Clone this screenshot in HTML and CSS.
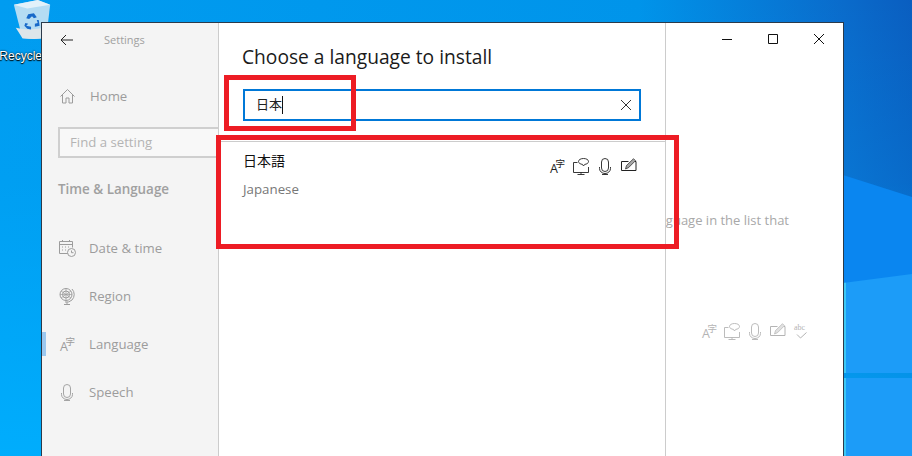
FILE: index.html
```html
<!DOCTYPE html>
<html lang="en">
<head>
<meta charset="utf-8">
<title>Settings</title>
<link rel="stylesheet" href="styles.css">
</head>
<body>
<svg class="defs" width="0" height="0" aria-hidden="true">
  <defs>
    <symbol id="i-lang" viewBox="0 0 17 17">
      <text class="lang-a" x="1" y="15">A</text>
      <text class="lang-z" x="6.500" y="9">字</text>
    </symbol>
    <symbol id="i-display" viewBox="0 0 17 17">
      <path d="M4.500 4.500h-4v10h15V9M8 14.500v2M4.500 16.500h7" fill="none" stroke="currentColor" stroke-width=".9"/>
      <path d="M10.500.5c2.800 0 5 1.200 5 3s-2 2.700-3.800 2.900L10.500 8l-1-1.600C7.500 6.200 5.500 5.200 5.500 3.500s2.200-3 5-3z" fill="#fff" stroke="currentColor" stroke-width=".9"/>
    </symbol>
    <symbol id="i-mic" viewBox="0 0 17 17">
      <path d="M4.500 4a3.500 3.500 0 0 1 7 0v6a3.500 3.500 0 0 1-7 0zM2.500 9v1.500a5.500 5 0 0 0 11 0V9M8 15.500v1M5 16.500h6" fill="none" stroke="currentColor" stroke-width=".9"/>
    </symbol>
    <symbol id="i-pen" viewBox="0 0 17 17">
      <path d="M7.500 3.500h-7v9h14.500V3.500h-1" fill="none" stroke="currentColor"/>
      <path d="M4.500 11l1-3.500L12.500.7l2 2-7 7z" fill="currentColor" fill-opacity=".4" stroke="currentColor" stroke-width=".7"/>
    </symbol>
    <symbol id="i-abc" viewBox="0 0 17 17">
      <text class="abc" x="1" y="7">abc</text>
      <path d="M4 11.500l3.500 3.500 6-5.500" fill="none" stroke="currentColor"/>
    </symbol>
    <symbol id="i-home" viewBox="0 0 17 17">
      <path d="M1.500 8.500L8.500 1.500l7 7M3.500 6.500v8.500h3.500v-5h3v5h3.500V6.500" fill="none" stroke="currentColor"/>
    </symbol>
    <symbol id="i-date" viewBox="0 0 17 17">
      <path d="M9 13.500H.5V1.500h13v6M.5 4.500h13M3.500 0v2M10.500 0v2M3 7h1M6 7h1M9 7h1M3 10h1M6 10h1" fill="none" stroke="currentColor"/>
      <circle cx="12.500" cy="12.500" r="4" fill="#f4f4f4" stroke="currentColor"/>
      <path d="M12.500 10.500v2.200h2" fill="none" stroke="currentColor"/>
    </symbol>
    <symbol id="i-region" viewBox="0 0 17 17">
      <circle cx="7" cy="6.500" r="6" fill="none" stroke="currentColor"/>
      <circle cx="7" cy="6.500" r="3.500" fill="none" stroke="currentColor"/>
      <path d="M2 3l10 7M12 3L2 10M1 6.500h12M7 .5v12" fill="none" stroke="currentColor" stroke-width=".7"/>
      <path d="M13 1a8 8 0 0 1 0 11 8 8 0 0 1-7 2M8 14v2M5 16.500h6" fill="none" stroke="currentColor"/>
    </symbol>
  </defs>
</svg>

<div class="desktop">
  <div class="pane-glow"></div>
  <div class="pane pane-upper"></div>
  <div class="pane pane-lower"></div>

  <div class="desk-icon">
    <svg class="bin" viewBox="0 0 40 44" aria-hidden="true">
      <path d="M1 5L26 0l13 5-4 34q-8 3-25 1z" fill="#b4dcf3"/>
      <path d="M3 29q15 4 33-1l-1 11q-8 3-25 1z" fill="#dde6ea"/>
      <path d="M1 5L26 0l13 5-24 4z" fill="#e2f1fa"/>
      <path d="M16 15l6-1 3 4-3 1-2-2-3 3-3-1zM27 21l1 6-5 1v-3l3-1-1-3zM14 27l5 1v3l-4-1-3-3 1-3 3 1z" fill="#1769c9"/>
    </svg>
    <span class="desk-label">Recycle Bin</span>
  </div>

  <div class="window">
    <aside class="sidebar">
      <div class="side-head">
        <svg class="back" viewBox="0 0 13 12" aria-hidden="true"><path d="M13 6H1M6 1L1 6l5 5" fill="none" stroke="currentColor"/></svg>
        <span class="app-name">Settings</span>
      </div>
      <div class="nav-item home-item"><svg class="nav-icon"><use href="#i-home"/></svg><span class="home-text">Home</span></div>
      <div class="find">Find a setting</div>
      <div class="section">Time &amp; Language</div>
      <nav class="nav-list">
        <div class="nav-item"><svg class="nav-icon"><use href="#i-date"/></svg><span>Date &amp; time</span></div>
        <div class="nav-item"><svg class="nav-icon"><use href="#i-region"/></svg><span>Region</span></div>
        <div class="nav-item current"><svg class="nav-icon"><use href="#i-lang"/></svg><span>Language</span></div>
        <div class="nav-item"><svg class="nav-icon"><use href="#i-mic"/></svg><span>Speech</span></div>
      </nav>
    </aside>

    <main class="content">
      <div class="controls">
        <span class="ctl"><svg viewBox="0 0 10 10" aria-hidden="true"><path d="M0 5.500h10" stroke="currentColor"/></svg></span>
        <span class="ctl"><svg viewBox="0 0 10 10" aria-hidden="true"><path d="M.5.500h9v9h-9z" fill="none" stroke="currentColor"/></svg></span>
        <span class="ctl"><svg viewBox="0 0 10 10" aria-hidden="true"><path d="M0 0l10 10M10 0L0 10" stroke="currentColor"/></svg></span>
      </div>
      <p class="hint">Select a language in the list that</p>
      <div class="feature-row">
        <svg class="feat"><use href="#i-lang"/></svg>
        <svg class="feat"><use href="#i-display"/></svg>
        <svg class="feat"><use href="#i-mic"/></svg>
        <svg class="feat"><use href="#i-pen"/></svg>
        <svg class="feat"><use href="#i-abc"/></svg>
      </div>
    </main>

    <section class="dialog">
      <h1 class="dialog-title">Choose a language to install</h1>
      <div class="search">
        <span class="search-text">日本</span><span class="caret"></span>
        <svg class="clear" viewBox="0 0 10 10" aria-hidden="true"><path d="M0 0l10 10M10 0L0 10" stroke="currentColor"/></svg>
      </div>
      <div class="result">
        <div class="result-names">
          <div class="native">日本語</div>
          <div class="english">Japanese</div>
        </div>
        <div class="result-icons">
          <svg class="feat"><use href="#i-lang"/></svg>
          <svg class="feat"><use href="#i-display"/></svg>
          <svg class="feat"><use href="#i-mic"/></svg>
          <svg class="feat"><use href="#i-pen"/></svg>
        </div>
      </div>
    </section>
  </div>

  <div class="mark mark-search"></div>
  <div class="mark mark-result"></div>
</div>
</body>
</html>
```
FILE: styles.css
```css
* { box-sizing: border-box; }
html, body { margin: 0; height: 100%; overflow: hidden; }
body { font-family: "Open Sans", "Noto Sans CJK JP", sans-serif; }
.defs { position: absolute; }

.desktop {
  position: relative;
  width: 912px;
  height: 456px;
  overflow: hidden;
  background:
    linear-gradient(to bottom, rgba(0, 176, 255, 0) 0%, rgba(0, 176, 255, .15) 40%, rgba(0, 176, 255, .85) 100%),
    linear-gradient(to right, #009cf0 0%, #0094ea 70%, #0a6ccc 92%, #0a5ec0 100%);
}
.pane-glow {
  position: absolute;
  left: 843px; top: 175px;
  width: 69px; height: 110px;
  background: #0a86f0;
  clip-path: polygon(0 0, 100% 22px, 100% 100%, 0 100%);
}
.pane { position: absolute; left: 843px; width: 69px; background: #1c9cf8; }
.pane-upper { top: 274px; height: 99px; clip-path: polygon(0 9px, 100% 0, 100% 100%, 0 100%); }
.pane-lower { top: 378px; height: 78px; }
.pane::before {
  content: "";
  position: absolute;
  left: 1px; top: 0; bottom: 0;
  width: 2px;
  background: #3cc8f5;
}

.desk-icon { position: absolute; left: 0; top: 0; width: 62px; display: flex; flex-direction: column; align-items: center; }
.bin { width: 40px; height: 42px; margin-left: 2px; }
.desk-label { color: #fff; font: 12px/16px "Liberation Sans", sans-serif; white-space: nowrap; margin-top: 6px; text-shadow: 0 0 2px #000, 0 1px 1px #000; }

.window {
  position: absolute;
  left: 41px; top: 22px;
  width: 803px; height: 460px;
  display: flex;
  background: #fff;
  border: 1px solid #2b3a4a;
  border-bottom: 0;
}
.sidebar { width: 176px; flex: none; background: #f4f4f4; overflow: hidden; color: #9c9c9c; font-size: 13.2px; }
.side-head { height: 33px; display: flex; align-items: center; }
.back { width: 13px; height: 12px; margin-left: 18px; color: #222; }
.app-name { margin-left: 31px; font-size: 11px; color: #a0a0a0; }
.nav-item { height: 48px; display: flex; align-items: center; padding-left: 17px; position: relative; }
.nav-icon { width: 17px; height: 17px; color: #9c9c9c; flex: none; margin-right: 13px; }
.home-item { margin-top: 16px; }
.home-text { margin-left: 1px; }
.find {
  margin: 7px 0 0 16px;
  width: 190px; height: 31px;
  border: 2px solid #cfcfcf;
  background: #f8f8f8;
  padding-left: 10px;
  line-height: 27px;
  color: #b4b4b4;
}
.section { margin: 19px 0 0 16px; height: 24px; line-height: 24px; font-weight: 600; font-size: 13.4px; color: #a0a0a0; }
.nav-list { margin-top: 23px; }
.current::before {
  content: "";
  position: absolute;
  left: 0; top: 12px;
  width: 4px; height: 24px;
  background: #9cc8ef;
}

.content { flex: 1; min-width: 0; position: relative; overflow: hidden; }
.controls { display: flex; justify-content: flex-end; color: #111; height: 32px; align-items: center; padding-right: 19px; gap: 36px; }
.ctl { width: 10px; height: 10px; display: block; }
.ctl svg { display: block; width: 10px; height: 10px; }
.hint { margin: 153px 54px 0 0; text-align: right; white-space: nowrap; font-size: 13px; line-height: 24px; height: 24px; color: #a8a8a8; }
.feature-row { display: flex; justify-content: flex-end; gap: 6px; margin-top: 91px; padding-right: 33px; color: #b4b4b4; }

.feat { width: 17px; height: 17px; flex: none; display: block; }
.lang-a { font: 12.5px "Open Sans", sans-serif; fill: currentColor; }
.lang-z { font: 9.5px "Noto Sans CJK JP", sans-serif; fill: currentColor; }
.abc { font: 8px "Liberation Serif", serif; fill: currentColor; }

.dialog {
  position: absolute;
  left: 176px; top: 0; bottom: 0;
  width: 448px;
  background: #fff;
  border-left: 1px solid #ccc;
  border-right: 1px solid #ccc;
  padding-top: 20px;
}
.dialog-title { margin: 0 0 0 23px; font-size: 19.2px; font-weight: 400; line-height: 28px; color: #1a1a1a; }
.search {
  margin: 18px 24px 0 24px;
  height: 32px;
  border: 2px solid #0078d7;
  display: flex;
  align-items: center;
  padding-left: 11px;
  font-size: 13px;
  color: #222;
  position: relative;
}
.search-text { font-family: "Noto Sans CJK JP", sans-serif; position: relative; bottom: 2px; }
.caret { width: 1px; height: 18px; background: #111; }
.clear { width: 10px; height: 10px; margin-left: auto; margin-right: 8px; color: #333; }
.result { margin-top: 20px; border-top: 1px solid #ccc; display: flex; justify-content: space-between; padding: 7px 27px 0 24px; }
.native { font: 14px/22px "Noto Sans CJK JP", sans-serif; color: #111; }
.english { font-size: 13.3px; line-height: 22px; margin-top: 7px; color: #777; }
.result-icons { display: flex; gap: 7px; margin-top: 9px; color: #222; }

.mark { position: absolute; border: 5px solid #ed1c24; }
.mark-search { left: 224px; top: 75px; width: 132px; height: 56px; }
.mark-result { left: 216px; top: 135px; width: 463px; height: 114px; }
```
